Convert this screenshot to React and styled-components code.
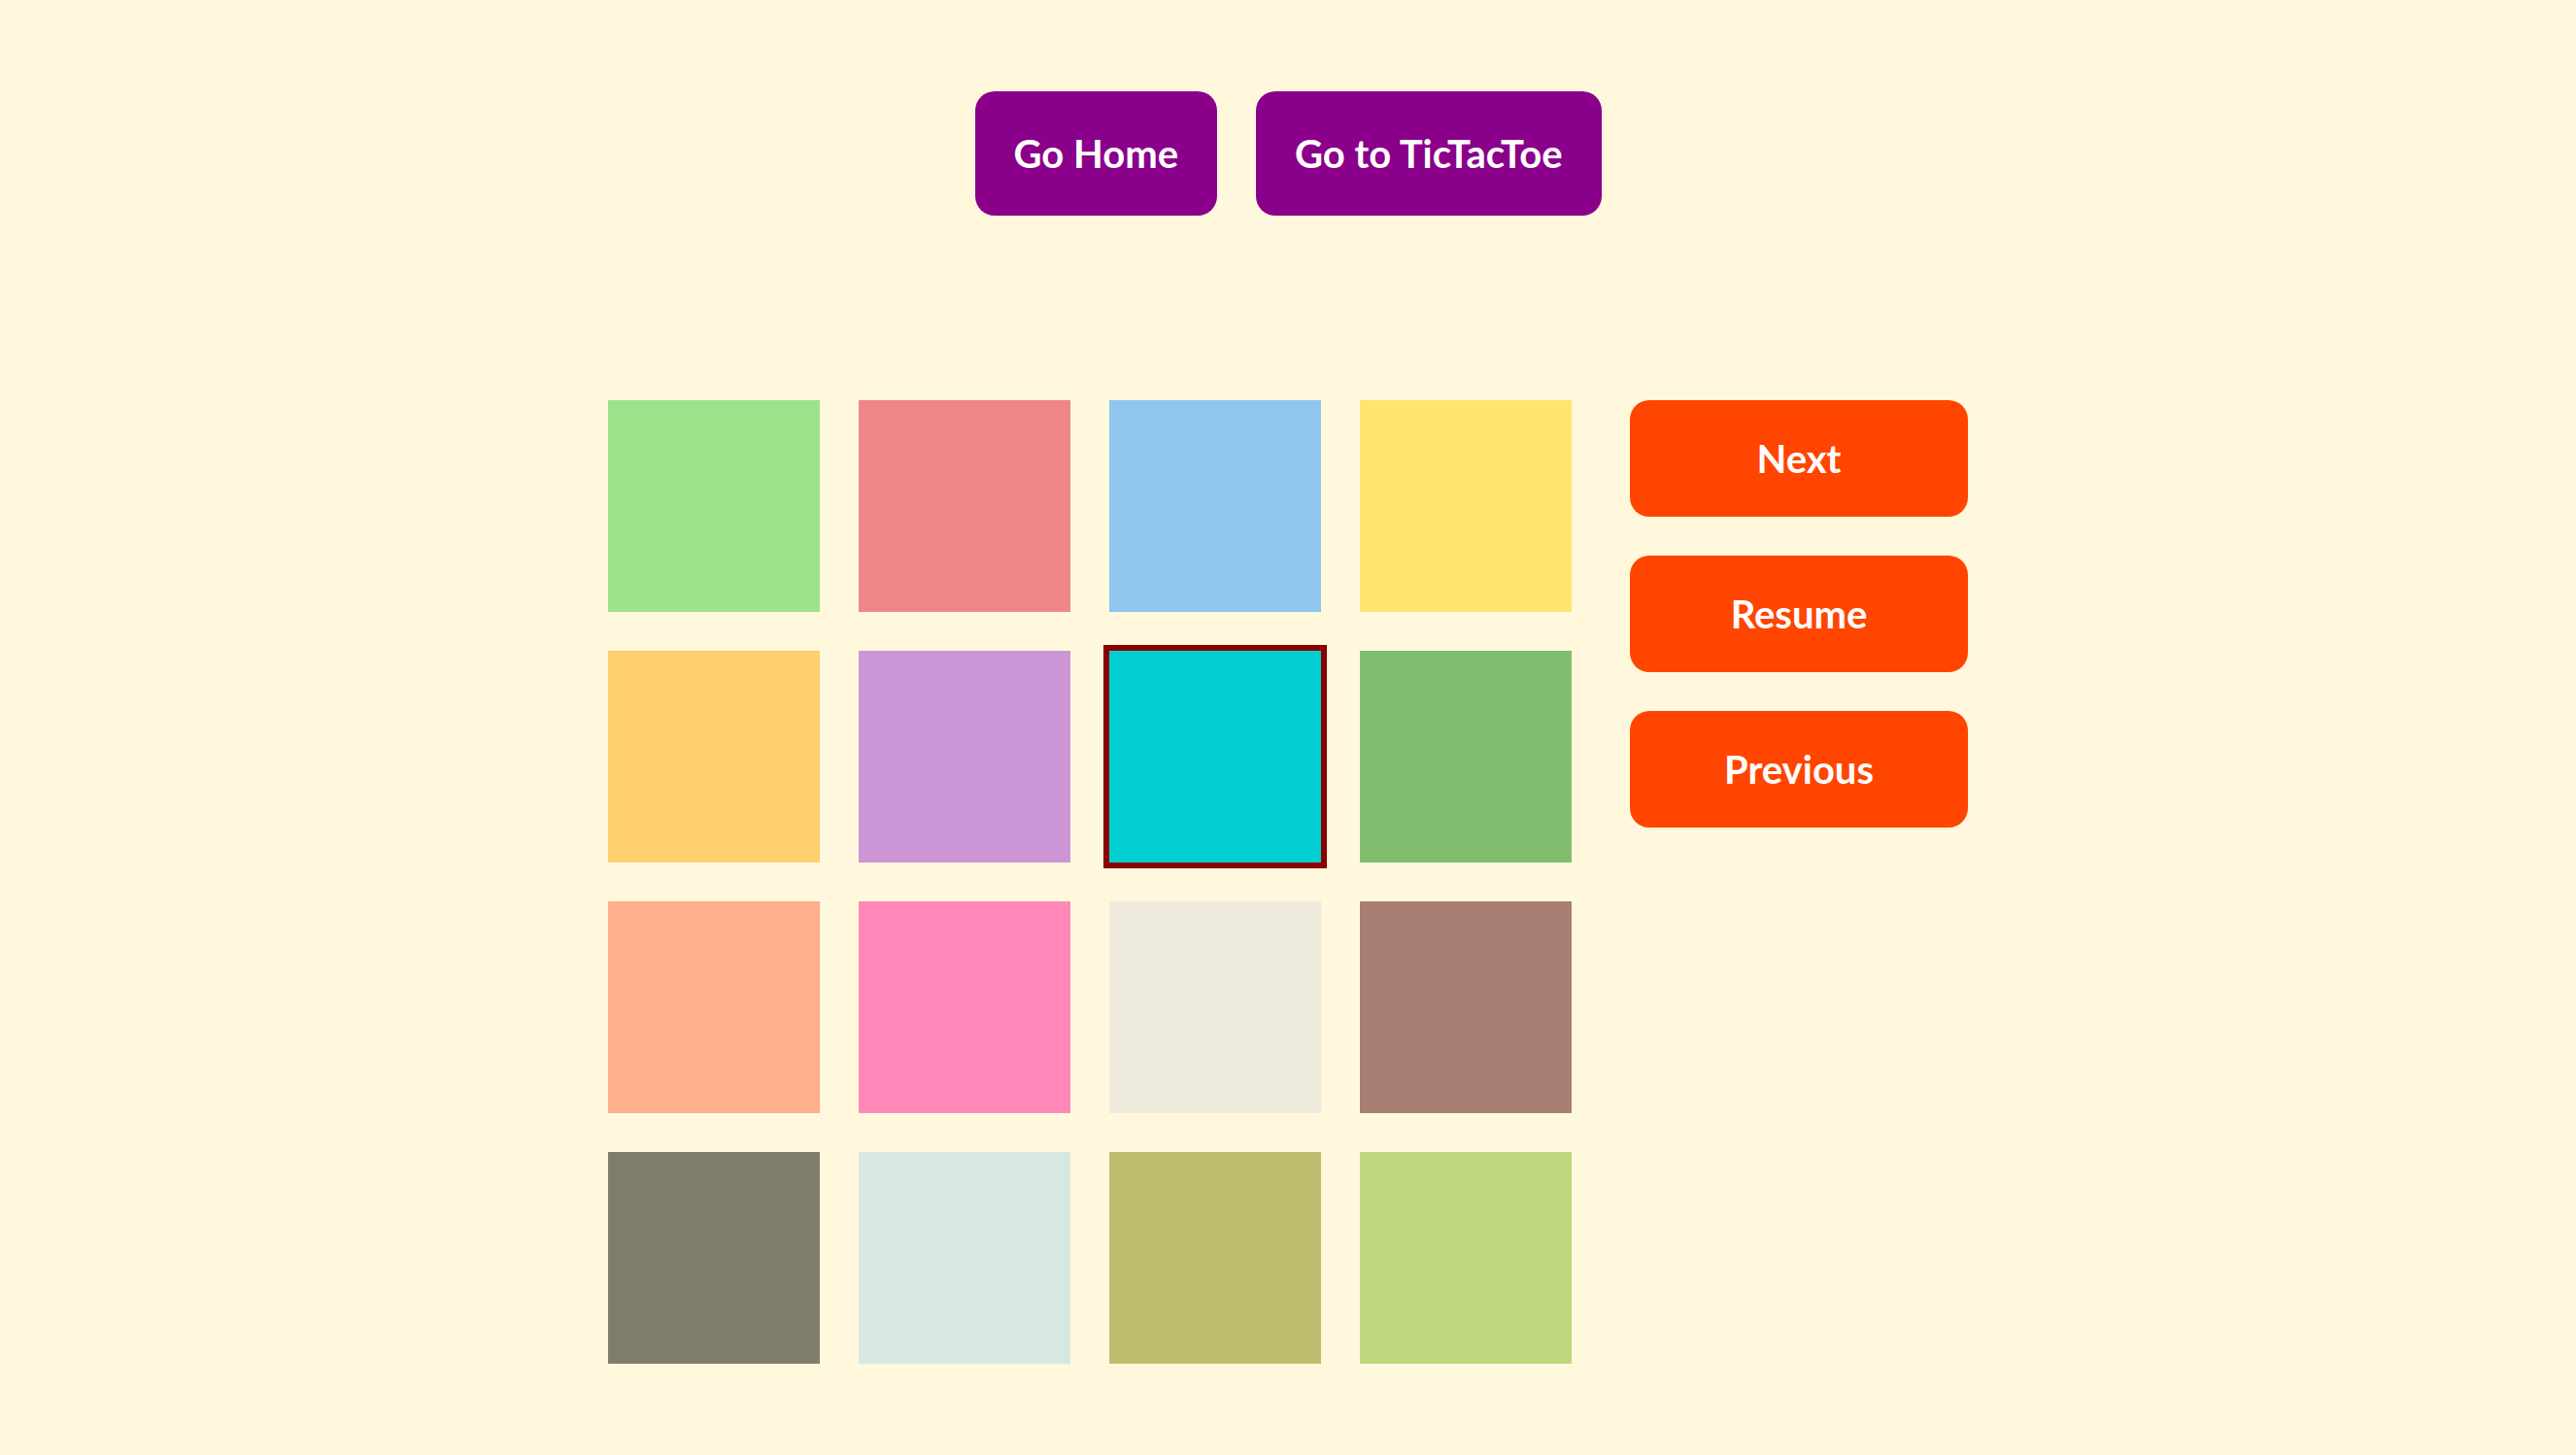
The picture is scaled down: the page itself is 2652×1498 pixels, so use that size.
import { createGlobalStyle, styled } from 'styled-components';

const GlobalStyle = createGlobalStyle`
    html, body {
        margin: 0;
        padding: 0;
        background: #FFF8DC;
        font-family: Lato, "Open Sans", sans-serif;
    }
`

const Page = styled.div`
    min-height: 1498px;
    display: flex;
    flex-direction: column;
    align-items: center;
`

const Nav = styled.nav`
    display: flex;
    gap: 40px;
    padding-top: 94px;
`

const NavButton = styled.button`
    background-color: #8B008B;
    color: #fff;
    border: none;
    border-radius: 20px;
    padding: 40px;
    font-family: Lato, sans-serif;
    font-size: 40px;
    font-weight: 700;
    line-height: 48px;
    cursor: pointer;
`

const Board = styled.section`
    display: flex;
    align-items: flex-start;
    gap: 60px;
    margin-top: 190px;
`

const Grid = styled.div`
    display: grid;
    grid-template-columns: repeat(4, 218px);
    grid-auto-rows: 218px;
    gap: 40px;
`

const Tile = styled.div`
    background-color: ${(props) => props.$color};
    outline: ${(props) => (props.$active ? '6px solid #8B0000' : 'none')};
`

const Controls = styled.div`
    display: flex;
    flex-direction: column;
    gap: 40px;
`

const ControlButton = styled.button`
    width: 348px;
    height: 120px;
    background-color: #FF4500;
    color: #fff;
    border: none;
    border-radius: 20px;
    font-family: Lato, sans-serif;
    font-size: 40px;
    font-weight: 700;
    cursor: pointer;
`

const colors = [
    '#9BE38A', '#EF868A', '#90C5EE', '#FFE56D',
    '#FFCE6F', '#CC96D6', '#00CED1', '#80BD6E',
    '#FFAE8E', '#FF88B8', '#EFEBDC', '#A87F72',
    '#807D6D', '#D7E8E1', '#BFBC6E', '#BED67C',
]

export default function App() {
    const active = 6
    return (
        <>
            <GlobalStyle />
            <Page>
                <Nav>
                    <NavButton>Go Home</NavButton>
                    <NavButton>Go to TicTacToe</NavButton>
                </Nav>
                <Board>
                    <Grid>
                        {colors.map((c, i) => (
                            <Tile key={i} $color={c} $active={i === active} />
                        ))}
                    </Grid>
                    <Controls>
                        <ControlButton>Next</ControlButton>
                        <ControlButton>Resume</ControlButton>
                        <ControlButton>Previous</ControlButton>
                    </Controls>
                </Board>
            </Page>
        </>
    )
}
